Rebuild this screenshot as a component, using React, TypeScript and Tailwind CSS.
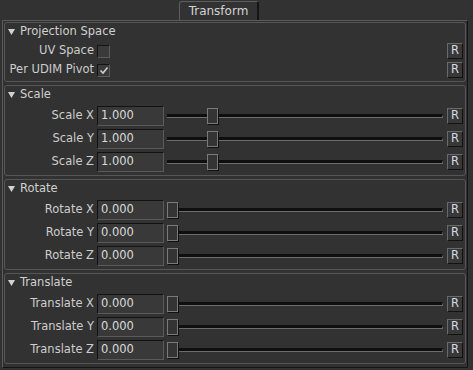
import React from "react";

type Row = { label: string; value: string; pos: number };

const FONT = { fontFamily: '"DejaVu Sans", Verdana, sans-serif' };

const Triangle = () => (
  <svg width="7" height="6" viewBox="0 0 7 6" className="shrink-0">
    <polygon points="0,0 7,0 3.5,6" fill="#d2d2d2" />
  </svg>
);

const ResetButton = () => (
  <div className="w-[16px] h-[16px] shrink-0 flex items-center justify-center bg-[#383838] border border-t-[#6a6a6a] border-l-[#6a6a6a] border-r-[#121212] border-b-[#121212] text-[11.5px] leading-none text-[#d4dce4]">
    R
  </div>
);

const Checkbox = ({ checked }: { checked?: boolean }) => (
  <div className="w-[13px] h-[13px] shrink-0 bg-[#3a3a3a] border border-t-[#141414] border-l-[#141414] border-r-[#5c5c5c] border-b-[#5c5c5c] flex items-center justify-center">
    {checked && (
      <svg width="10" height="9" viewBox="0 0 10 9">
        <polyline
          points="1.5,4.5 4,7 8.5,1.5"
          fill="none"
          stroke="#cfcfcf"
          strokeWidth="1.6"
        />
      </svg>
    )}
  </div>
);

const Slider = ({ pos }: { pos: number }) => (
  <div className="relative flex-1 ml-[3px] mr-[4px] h-[20px] flex items-center">
    <div className="w-full h-[4px] border-t-[3px] border-t-[#0f0f0f] border-b border-b-[#6c6c6c] border-r border-r-[#6c6c6c]" />
    <div
      className="absolute top-[2px] w-[11px] h-[16px] bg-[#343434] border border-[#7a7a7a] shadow-[1px_1px_0_#101010]"
      style={{ left: pos }}
    />
  </div>
);

const GroupHeader = ({ title }: { title: string }) => (
  <div className="h-[18px] flex items-center pl-[3px] gap-[5px] text-[11.5px] text-[#d0d0d0]">
    <Triangle />
    <span>{title}</span>
  </div>
);

const ValueGroup = ({ title, rows }: { title: string; rows: Row[] }) => (
  <div className="h-[91px] border border-[#565656] rounded-[3px] flex flex-col">
    <GroupHeader title={title} />
    <div className="mt-[2px] flex flex-col gap-[3px]">
      {rows.map((r) => (
        <div key={r.label} className="h-[20px] flex items-center pr-[2px]">
          <div className="w-[92px] pr-[3px] text-right text-[11.5px] text-[#cdcdcd] whitespace-nowrap">
            {r.label}
          </div>
          <div className="w-[67px] h-[20px] shrink-0 bg-[#393939] border border-t-[#121212] border-l-[#121212] border-r-[#5a5a5a] border-b-[#5a5a5a] pl-[3px] flex items-center text-[11.5px] text-[#dadada]">
            {r.value}
          </div>
          <Slider pos={r.pos} />
          <ResetButton />
        </div>
      ))}
    </div>
  </div>
);

export default function App() {
  return (
    <div
      className="w-[473px] h-[370px] bg-[#323232] pt-[1px] overflow-hidden"
      style={FONT}
    >
      <div className="ml-[179px] w-[80px] h-[19px] rounded-t-[3px] border-t border-l border-r-2 border-t-[#5e5e5e] border-l-[#5e5e5e] border-r-[#151515] flex items-center justify-center text-[12px] text-[#d2d2d2]">
        Transform
      </div>
      <div className="ml-[2px] w-[466px] h-[348px] border border-t-[#5a5a5a] border-l-[#5a5a5a] border-r-[#141414] border-b-[#141414] px-[1px] pt-[1px] flex flex-col gap-[3px]">
        <div className="h-[60px] border border-[#565656] rounded-[3px] flex flex-col">
          <GroupHeader title="Projection Space" />
          <div className="mt-[2px] flex flex-col gap-[3px]">
            <div className="h-[16px] flex items-center pr-[2px]">
              <div className="w-[92px] pr-[3px] text-right text-[11.5px] text-[#cdcdcd]">
                UV Space
              </div>
              <Checkbox />
              <div className="flex-1" />
              <ResetButton />
            </div>
            <div className="h-[16px] flex items-center pr-[2px]">
              <div className="w-[92px] pr-[3px] text-right text-[11.5px] text-[#cdcdcd] whitespace-nowrap">
                Per UDIM Pivot
              </div>
              <Checkbox checked />
              <div className="flex-1" />
              <ResetButton />
            </div>
          </div>
        </div>
        <ValueGroup
          title="Scale"
          rows={[
            { label: "Scale X", value: "1.000", pos: 40 },
            { label: "Scale Y", value: "1.000", pos: 40 },
            { label: "Scale Z", value: "1.000", pos: 40 },
          ]}
        />
        <ValueGroup
          title="Rotate"
          rows={[
            { label: "Rotate X", value: "0.000", pos: 0 },
            { label: "Rotate Y", value: "0.000", pos: 0 },
            { label: "Rotate Z", value: "0.000", pos: 0 },
          ]}
        />
        <ValueGroup
          title="Translate"
          rows={[
            { label: "Translate X", value: "0.000", pos: 0 },
            { label: "Translate Y", value: "0.000", pos: 0 },
            { label: "Translate Z", value: "0.000", pos: 0 },
          ]}
        />
      </div>
    </div>
  );
}
